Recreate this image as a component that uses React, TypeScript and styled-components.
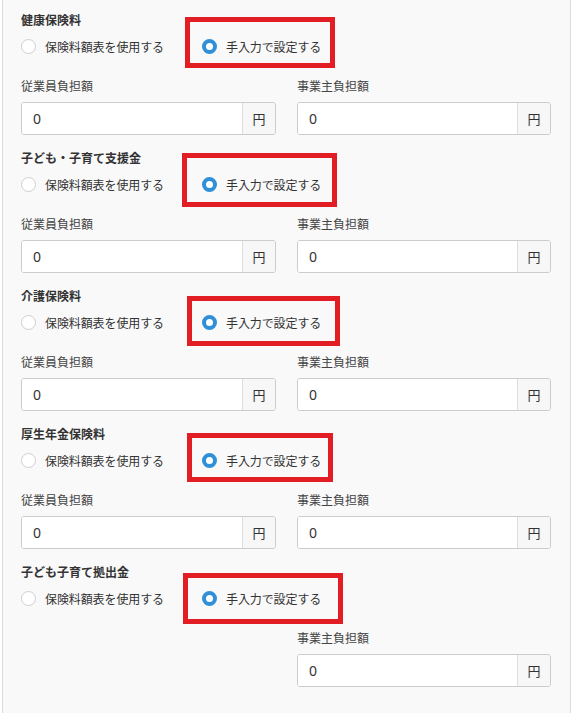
import styled, { createGlobalStyle } from 'styled-components';

const GlobalStyle = createGlobalStyle`
  html, body {
    margin: 0;
    padding: 0;
    background: #fff;
  }
  body {
    font-family: "Noto Sans CJK JP", "Noto Sans", sans-serif;
    color: #333;
  }
`;

interface Marker {
  left: number;
  top: number;
  width: number;
  height: number;
}

interface Insurance {
  title: string;
  employee: boolean;
  marker: Marker;
}

// red annotation boxes, placed relative to each section
const items: Insurance[] = [
  { title: '健康保険料', employee: true, marker: { left: 164, top: 5, width: 150, height: 51 } },
  { title: '子ども・子育て支援金', employee: true, marker: { left: 161, top: 3, width: 155, height: 54 } },
  { title: '介護保険料', employee: true, marker: { left: 166, top: 8, width: 153, height: 50 } },
  { title: '厚生年金保険料', employee: true, marker: { left: 166, top: 7, width: 146, height: 49 } },
  { title: '子ども子育て拠出金', employee: false, marker: { left: 162, top: 9, width: 160, height: 51 } },
];

const AmountField: React.FC<{ label: string }> = ({ label }) => (
  <Field>
    <FieldLabel>{label}</FieldLabel>
    <InputGroup>
      <AmountInput defaultValue="0" />
      <Unit>円</Unit>
    </InputGroup>
  </Field>
);

const App = () => (
  <>
    <GlobalStyle />
    <Page>
      <Panel>
        {items.map(item => (
          <Section key={item.title}>
            <Title>{item.title}</Title>
            <RadioRow>
              <RadioOption>
                <RadioCircle />
                <RadioText>保険料額表を使用する</RadioText>
              </RadioOption>
              <RadioOption>
                <RadioCircle $checked />
                <RadioText>手入力で設定する</RadioText>
              </RadioOption>
            </RadioRow>
            <Fields>
              {item.employee ? <AmountField label="従業員負担額" /> : <div />}
              <AmountField label="事業主負担額" />
            </Fields>
            <Highlight
              style={{
                left: item.marker.left,
                top: item.marker.top,
                width: item.marker.width,
                height: item.marker.height,
              }}
            />
          </Section>
        ))}
      </Panel>
    </Page>
  </>
);

export default App;

const Page = styled.div`
  padding-left: 2px;
  width: 569px;
`;

const Panel = styled.div`
  box-sizing: border-box;
  min-height: 713px;
  padding: 12px 18px 0 18px;
  background: #f9f9f9;
  border-left: 1px solid #dcdcdc;
  border-right: 1px solid #dcdcdc;
`;

const Section = styled.div`
  position: relative;
  height: 138px;
`;

const Title = styled.div`
  font-size: 12px;
  line-height: 16px;
  font-weight: bold;
  color: #333;
`;

const RadioRow = styled.div`
  display: flex;
  align-items: center;
  height: 20px;
  margin-top: 8px;
`;

const RadioOption = styled.label`
  display: flex;
  align-items: center;
  width: 181px;
`;

const RadioText = styled.span`
  margin-left: 9px;
  font-size: 12px;
  color: #333;
  letter-spacing: -0.1px;
`;

const RadioCircle = styled.span<{ $checked?: boolean }>`
  box-sizing: border-box;
  width: 15px;
  height: 15px;
  border-radius: 50%;
  flex-shrink: 0;
  background: #fff;
  border: ${props => (props.$checked ? '4.5px solid #2f8fd8' : '1px solid #cfcfcf')};
`;

const Fields = styled.div`
  display: grid;
  grid-template-columns: 255px 254px;
  column-gap: 21px;
  margin-top: 22px;
`;

const Field = styled.div`
  display: flex;
  flex-direction: column;
`;

const FieldLabel = styled.div`
  font-size: 12px;
  line-height: 16px;
  color: #444;
  margin-bottom: 8px;
`;

const InputGroup = styled.div`
  display: flex;
  height: 33px;
  box-sizing: border-box;
  border: 1px solid #cccccc;
  border-radius: 3px;
  background: #fff;
  overflow: hidden;
`;

const AmountInput = styled.input`
  flex: 1;
  min-width: 0;
  border: none;
  outline: none;
  padding: 0 11px;
  font-family: "Noto Sans", sans-serif;
  font-size: 14px;
  color: #333;
  background: #fff;
`;

const Unit = styled.div`
  display: flex;
  align-items: center;
  justify-content: center;
  width: 32px;
  border-left: 1px solid #dddddd;
  background: #f7f7f7;
  font-size: 13px;
  color: #333;
`;

const Highlight = styled.div`
  position: absolute;
  box-sizing: border-box;
  border: 5px solid #e21d24;
  pointer-events: none;
`;
